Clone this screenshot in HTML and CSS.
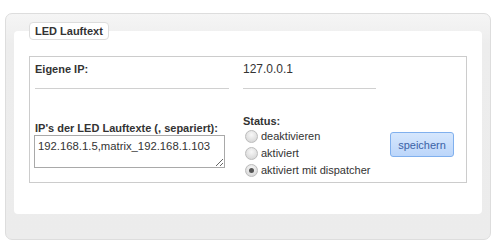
FILE: index.html
```html
<!DOCTYPE html>
<html lang="de">
<head>
<meta charset="utf-8">
<title>LED Lauftext</title>
<link rel="stylesheet" href="styles.css">
</head>
<body>
<div class="panel">
  <div class="inner">
    <div class="legend">LED Lauftext</div>
    <div class="box">
      <div class="cell line label">Eigene IP:</div>
      <div class="cell line value">127.0.0.1</div>
      <div class="cell"></div>
      <div class="cell ips">
        <div class="label lh">IP's der LED Lauftexte (, separiert):</div>
        <textarea class="ta">192.168.1.5,matrix_192.168.1.103</textarea>
      </div>
      <div class="cell status">
        <div class="label lh">Status:</div>
        <label class="opt"><span class="radio"></span>deaktivieren</label>
        <label class="opt"><span class="radio"></span>aktiviert</label>
        <label class="opt"><span class="radio on"></span>aktiviert mit dispatcher</label>
      </div>
      <div class="cell">
        <button class="btn">speichern</button>
      </div>
    </div>
  </div>
</div>
</body>
</html>
```
FILE: styles.css
```css
html, body {
  margin: 0;
  padding: 0;
  background: #ffffff;
}
body {
  font-family: "Liberation Sans", Arial, sans-serif;
  font-size: 12px;
  color: #333333;
}
.panel {
  margin: 13px 0 0 5px;
  width: 468px;
  height: 183px;
  padding: 17px 8px 25px 8px;
  border: 1px solid #dddddd;
  border-radius: 7px;
  background: linear-gradient(#f5f5f5, #ededed 30px, #ececec);
}
.inner {
  background: #ffffff;
  border-radius: 4px;
  height: 183px;
  padding: 0 15px;
  box-sizing: border-box;
}
.legend {
  display: inline-block;
  position: relative;
  top: -9px;
  height: 16px;
  line-height: 16px;
  padding: 0 5px;
  border: 1px solid #dddddd;
  border-radius: 4px;
  background: #ffffff;
  font-weight: bold;
  font-size: 11px;
  color: #333333;
}
.box {
  margin-top: 7px;
  border: 1px solid #cccccc;
  height: 125px;
  padding: 0 0 0 5px;
  display: grid;
  grid-template-columns: 194px 133px auto;
  grid-template-rows: 32px 75px;
  column-gap: 14px;
  row-gap: 18px;
  align-items: center;
  white-space: nowrap;
}
.cell.line {
  align-self: stretch;
  border-bottom: 1px solid #d0d0d0;
  padding-top: 5px;
  line-height: 14px;
  box-sizing: border-box;
}
.label {
  font-weight: bold;
  font-size: 11px;
}
.value {
  font-size: 12px;
}
.lh {
  line-height: 14px;
}
.ta {
  display: block;
  margin: 0 0 0 -1px;
  width: 191px;
  height: 33px;
  box-sizing: border-box;
  padding: 3px 3px;
  border: 1px solid #a9a9a9;
  font-family: "Liberation Sans", Arial, sans-serif;
  font-size: 11.3px;
  color: #333333;
  line-height: 14px;
  resize: vertical;
  overflow: hidden;
}
.status {
  padding-top: 4px;
}
.opt {
  display: flex;
  align-items: center;
  height: 17px;
  line-height: 17px;
  font-size: 11px;
  color: #333333;
}
.radio {
  width: 11px;
  height: 11px;
  margin: 0 3px 0 2px;
  border: 1px solid #bcbcbc;
  border-radius: 50%;
  background: radial-gradient(circle at 50% 35%, #f8f8f8, #dcdcdc 70%, #cfcfcf);
  display: flex;
  align-items: center;
  justify-content: center;
}
.radio.on::after {
  content: "";
  width: 5px;
  height: 5px;
  border-radius: 50%;
  background: #555555;
}
.btn {
  width: 64px;
  height: 25px;
  padding: 0;
  border: 1px solid #80b0ee;
  border-radius: 3px;
  background: linear-gradient(#d6e7fd, #bcd6fa);
  font-family: "Liberation Sans", Arial, sans-serif;
  font-size: 11px;
  color: #3b63a6;
  cursor: pointer;
}
```
